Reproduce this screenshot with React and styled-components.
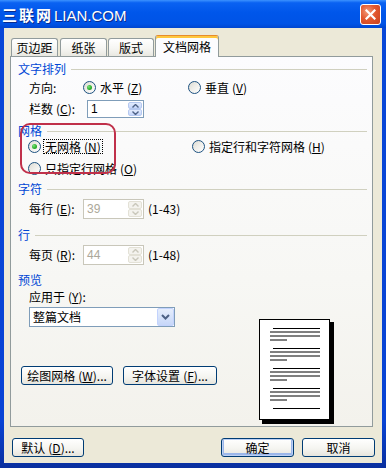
import React from 'react';
import styled, { createGlobalStyle } from 'styled-components';

const Global = createGlobalStyle`
  html, body { margin: 0; padding: 0; background: #fff; }
  body { font-family: "Noto Sans CJK SC", "Noto Sans", sans-serif; font-size: 12px; color: #000; }
  * { box-sizing: border-box; }
`;

const FONT = `"Noto Sans CJK SC", "Noto Sans", sans-serif`;

const Window = styled.div`
  width: 386px;
  height: 468px;
  display: flex;
  flex-direction: column;
  overflow: hidden;
  background: linear-gradient(to bottom, #0847D8 0%, #0843D4 90%, #0A2F9E 100%);
`;

const TitleBar = styled.div`
  position: relative;
  height: 28px;
  flex: none;
  display: flex;
  align-items: center;
  padding: 0 5px 0 2px;
  background: linear-gradient(to bottom, #3C92FF 0%, #0A62F2 10%, #0056EA 45%, #0053E6 85%, #0046D0 100%);
`;

const TitleText = styled.div`
  display: flex;
  align-items: baseline;
  color: #fff;
  text-shadow: 1px 1px 0 #0A2C8E;
`;

const TitleCjk = styled.span`
  font-family: ${FONT};
  font-weight: 700;
  font-size: 15px;
  letter-spacing: 2px;
`;

const TitleLatin = styled.span`
  font-family: "Liberation Sans", Arial, sans-serif;
  font-size: 15px;
  margin-left: 1px;
`;

const CloseButton = styled.div`
  margin-left: auto;
  width: 21px;
  height: 21px;
  border: 1px solid #fff;
  border-radius: 3px;
  background: radial-gradient(circle at 35% 35%, #F29A7A 0%, #E2582F 45%, #C8401E 100%);
  display: flex;
  align-items: center;
  justify-content: center;
`;

const Body = styled.div`
  flex: 1;
  margin: 0 4px 5px 4px;
  background: #ECE9D8;
  padding: 7px 9px 0 6px;
  display: flex;
  flex-direction: column;
`;

const TabStrip = styled.div`
  height: 21px;
  display: flex;
  align-items: flex-end;
  flex: none;
`;

const Tab = styled.div`
  width: ${p => p.$w}px;
  margin-left: ${p => p.$ml}px;
  height: ${p => (p.$active ? 22 : 18)}px;
  border: 1px solid #919B9C;
  border-bottom: none;
  border-radius: 3px 3px 0 0;
  background: ${p => (p.$active ? '#FCFCFE' : 'linear-gradient(to bottom, #FFFFFF 0%, #F6F6F3 55%, #E9E8E1 100%)')};
  display: flex;
  align-items: center;
  justify-content: center;
  font-size: 12px;
  line-height: 14px;
  padding-top: ${p => (p.$active ? 1 : 0)}px;
  ${p => p.$active && `
    border-top: 1px solid #E68B2C;
    box-shadow: inset 0 2px 0 #FFC73C;
    margin-bottom: -1px;
    position: relative;
    z-index: 1;
  `}
`;

const Panel = styled.div`
  position: relative;
  height: 371px;
  flex: none;
  border: 1px solid #919B9C;
  background: linear-gradient(to bottom, #FCFCFE 0%, #F7F7F4 60%, #F3F2EC 100%);
  padding: 0 5px 0 7px;
  display: flex;
  flex-direction: column;
`;

const GroupHeader = styled.div`
  margin-top: ${p => p.$mt}px;
  height: 14px;
  display: flex;
  align-items: center;
  color: #0046D5;
  line-height: 14px;
  font-size: 12px;
`;

const HeaderLine = styled.div`
  flex: 1;
  height: 1px;
  margin-left: 5px;
  background: #D0D0BF;
`;

const Row = styled.div`
  margin-top: ${p => p.$mt}px;
  height: ${p => p.$h}px;
  padding-left: ${p => p.$indent ?? 11}px;
  display: flex;
  align-items: center;
  line-height: 14px;
`;

const FieldLabel = styled.span`
  width: ${p => (p.$w ? `${p.$w}px` : 'auto')};
  flex: none;
  white-space: nowrap;
`;

const Acc = styled.span`
  margin-left: 3px;
  & u { text-decoration: underline; }
`;

const Option = styled.div`
  width: ${p => (p.$w ? `${p.$w}px` : 'auto')};
  flex: none;
  display: flex;
  align-items: center;
`;

const RadioCircle = styled.span`
  width: 13px;
  height: 13px;
  flex: none;
  border-radius: 50%;
  border: 1px solid #1C5180;
  background: linear-gradient(135deg, #DCDBD3 0%, #EEEDE8 45%, #FFFFFF 100%);
  display: flex;
  align-items: center;
  justify-content: center;
  &::after {
    content: '';
    width: 5px;
    height: 5px;
    border-radius: 50%;
    background: ${p => (p.$checked ? 'radial-gradient(circle at 35% 35%, #7BE07B 0%, #2CB22C 55%, #1E8F1E 100%)' : 'transparent')};
  }
`;

const RadioText = styled.span`
  margin-left: 2px;
  padding: 0 1px;
  border: 1px ${p => (p.$focus ? 'dotted #000' : 'solid transparent')};
  white-space: nowrap;
  line-height: 13px;
`;

const Spin = styled.div`
  width: ${p => p.$w}px;
  height: ${p => p.$h}px;
  border: 1px solid ${p => (p.$disabled ? '#C9C7BA' : '#7F9DB9')};
  background: #fff;
  display: flex;
  flex: none;
`;

const SpinValue = styled.span`
  flex: 1;
  padding-left: 3px;
  display: flex;
  align-items: center;
  color: ${p => (p.$disabled ? '#ACA899' : '#000')};
  font-family: "Liberation Sans", Arial, sans-serif;
  font-size: 12px;
`;

const SpinButtons = styled.div`
  width: 15px;
  padding: 1px 1px 1px 0;
  display: flex;
  flex-direction: column;
`;

const SpinHalf = styled.div`
  flex: 1;
  border-radius: 2px;
  border: 1px solid ${p => (p.$disabled ? '#E3E1D6' : '#B6C9F0')};
  background: ${p => (p.$disabled ? '#F4F3EE' : 'linear-gradient(to bottom, #E2EBFD 0%, #C6D6FA 100%)')};
  display: flex;
  align-items: center;
  justify-content: center;
`;

const RangeText = styled.span`
  margin-left: 4px;
  font-family: ${FONT};
  white-space: nowrap;
`;

const BottomSection = styled.div`
  display: flex;
  flex: 1;
`;

const LeftCol = styled.div`
  width: 230px;
  display: flex;
  flex-direction: column;
`;

const PreviewCol = styled.div`
  margin-left: 11px;
  padding-top: 32px;
`;

const Select = styled.div`
  margin-top: 3px;
  margin-left: 11px;
  width: 146px;
  height: 20px;
  border: 1px solid #7F9DB9;
  background: #fff;
  display: flex;
  align-items: center;
`;

const SelectText = styled.span`
  flex: 1;
  padding-left: 3px;
  line-height: 14px;
`;

const SelectButton = styled.div`
  width: 17px;
  height: 18px;
  border-radius: 2px;
  border: 1px solid #C3D3FD;
  background: linear-gradient(to bottom, #E6EEFC 0%, #C7D7F9 100%);
  display: flex;
  align-items: center;
  justify-content: center;
`;

const ButtonRow = styled.div`
  margin-top: ${p => p.$mt}px;
  display: flex;
  gap: ${p => p.$gap}px;
  padding-left: ${p => p.$pl}px;
`;

const Button = styled.div`
  width: ${p => p.$w}px;
  height: 19px;
  margin-left: ${p => p.$ml || 0}px;
  border: 1px solid #003C74;
  border-radius: 3px;
  background: linear-gradient(to bottom, #FFFFFF 0%, #F5F5F1 55%, #E6E5DD 100%);
  display: flex;
  align-items: center;
  justify-content: center;
  white-space: nowrap;
  line-height: 14px;
  font-size: 12px;
  ${p => p.$default && `box-shadow: inset 0 0 0 1px #BCD0F4, inset 0 -1px 0 2px #9CB7EA;`}
`;

const BottomBar = styled.div`
  margin: 11px -2px 0 2px;
  display: flex;
  align-items: center;
`;

const Spacer = styled.div`
  flex: 1;
`;

const Annotation = styled.div`
  position: absolute;
  left: 9px;
  top: 66px;
  width: 96px;
  height: 51px;
  border: 2px solid #C0304A;
  border-radius: 10px;
  pointer-events: none;
`;

const Arrow = ({ up, color }) => (
  <svg width="7" height="4" viewBox="0 0 7 4">
    <path d={up ? 'M0.5 3.5 L3.5 0.5 L6.5 3.5' : 'M0.5 0.5 L3.5 3.5 L6.5 0.5'} fill="none" stroke={color} strokeWidth="1.4" />
  </svg>
);

const SpinBox = ({ w, h, value, disabled }) => {
  const c = disabled ? '#C9C7BA' : '#4D6185';
  return (
    <Spin $w={w} $h={h} $disabled={disabled}>
      <SpinValue $disabled={disabled}>{value}</SpinValue>
      <SpinButtons>
        <SpinHalf $disabled={disabled}><Arrow up color={c} /></SpinHalf>
        <SpinHalf $disabled={disabled}><Arrow color={c} /></SpinHalf>
      </SpinButtons>
    </Spin>
  );
};

const Radio = ({ checked, focus, children, w }) => (
  <Option $w={w}>
    <RadioCircle $checked={checked} />
    <RadioText $focus={focus}>{children}</RadioText>
  </Option>
);

const K = ({ k }) => (
  <Acc>(<u>{k}</u>)</Acc>
);

const PagePreview = () => {
  const groups = [9.5, 29.5, 49.5, 69.5];
  return (
    <svg width="75" height="105" viewBox="0 0 75 105">
      <rect x="3" y="3" width="72" height="102" fill="#000" />
      <rect x="0.5" y="0.5" width="70" height="100" fill="#fff" stroke="#000" />
      {groups.map(y => (
        <g key={y} stroke="#000" strokeWidth="1">
          <line x1="14" y1={y} x2="61" y2={y} />
          <line x1="11" y1={y + 3.5} x2="61" y2={y + 3.5} />
          <line x1="11" y1={y + 7.5} x2="61" y2={y + 7.5} />
          <line x1="11" y1={y + 11.5} x2="28" y2={y + 11.5} />
        </g>
      ))}
      <line x1="14" y1="89.5" x2="61" y2="89.5" stroke="#000" />
    </svg>
  );
};

export default function App() {
  return (
    <>
      <Global />
      <Window>
        <TitleBar>
          <TitleText>
            <TitleCjk>三联网</TitleCjk>
            <TitleLatin>LIAN.COM</TitleLatin>
          </TitleText>
          <CloseButton>
            <svg width="11" height="11" viewBox="0 0 11 11">
              <path d="M1.5 1.5 L9.5 9.5 M9.5 1.5 L1.5 9.5" stroke="#fff" strokeWidth="2.2" strokeLinecap="square" />
            </svg>
          </CloseButton>
        </TitleBar>
        <Body>
          <TabStrip>
            <Tab $w={47} $ml={1}>页边距</Tab>
            <Tab $w={47} $ml={2}>纸张</Tab>
            <Tab $w={46} $ml={1}>版式</Tab>
            <Tab $w={64} $ml={1} $active>文档网格</Tab>
          </TabStrip>
          <Panel>
            <GroupHeader $mt={5}>文字排列<HeaderLine /></GroupHeader>
            <Row $mt={4} $h={16}>
              <FieldLabel $w={54}>方向:</FieldLabel>
              <Radio checked w={105}>水平<K k="Z" /></Radio>
              <Radio>垂直<K k="V" /></Radio>
            </Row>
            <Row $mt={5} $h={18}>
              <FieldLabel $w={58}>栏数<K k="C" />:</FieldLabel>
              <SpinBox w={57} h={18} value="1" />
            </Row>
            <GroupHeader $mt={6}>网格<HeaderLine /></GroupHeader>
            <Row $mt={1} $h={16} $indent={10}>
              <Radio checked focus w={164}>无网格<K k="N" /></Radio>
              <Radio>指定行和字符网格<K k="H" /></Radio>
            </Row>
            <Row $mt={7} $h={16} $indent={10}>
              <Radio>只指定行网格<K k="O" /></Radio>
            </Row>
            <GroupHeader $mt={6}>字符<HeaderLine /></GroupHeader>
            <Row $mt={3} $h={20}>
              <FieldLabel $w={54}>每行<K k="E" />:</FieldLabel>
              <SpinBox w={61} h={20} value="39" disabled />
              <RangeText>(1-43)</RangeText>
            </Row>
            <GroupHeader $mt={9}>行<HeaderLine /></GroupHeader>
            <Row $mt={3} $h={20}>
              <FieldLabel $w={54}>每页<K k="R" />:</FieldLabel>
              <SpinBox w={61} h={20} value="44" disabled />
              <RangeText>(1-48)</RangeText>
            </Row>
            <GroupHeader $mt={8}>预览</GroupHeader>
            <BottomSection>
              <LeftCol>
                <Row $mt={3} $h={14}>
                  <FieldLabel>应用于<K k="Y" />:</FieldLabel>
                </Row>
                <Select>
                  <SelectText>整篇文档</SelectText>
                  <SelectButton>
                    <svg width="9" height="6" viewBox="0 0 9 6">
                      <path d="M1 1 L4.5 4.5 L8 1" fill="none" stroke="#4D6185" strokeWidth="2" />
                    </svg>
                  </SelectButton>
                </Select>
                <ButtonRow $mt={39} $gap={10} $pl={3}>
                  <Button $w={92}>绘图网格<K k="W" />...</Button>
                  <Button $w={94}>字体设置<K k="F" />...</Button>
                </ButtonRow>
              </LeftCol>
              <PreviewCol>
                <PagePreview />
              </PreviewCol>
            </BottomSection>
            <Annotation />
          </Panel>
          <BottomBar>
            <Button $w={72}>默认<K k="D" />...</Button>
            <Spacer />
            <Button $w={73} $default>确定</Button>
            <Button $w={73} $ml={8}>取消</Button>
          </BottomBar>
        </Body>
      </Window>
    </>
  );
}
